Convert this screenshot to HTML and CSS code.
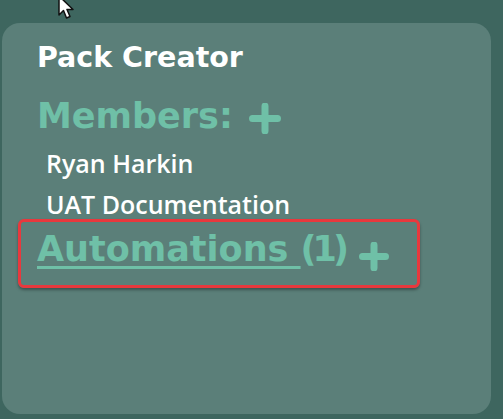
FILE: index.html
```html
<!DOCTYPE html>
<html lang="en">
<head>
  <meta charset="UTF-8">
  <meta name="viewport" content="width=device-width, initial-scale=1.0">
  <title>Pack Creator</title>
  <link rel="stylesheet" href="styles.css">
</head>
<body>
  <div class="card">
    <h2 class="title">Pack Creator</h2>

    <div class="section">
      <span class="section-name">Members:</span>
      <svg class="plus" width="32" height="31" viewBox="0 0 32 31">
        <path d="M16 3 V28 M3.5 15.5 H28.5" stroke="#6fc0a7" stroke-width="7" stroke-linecap="round"/>
      </svg>
    </div>
    <ul class="members">
      <li>Ryan Harkin</li>
      <li>UAT Documentation</li>
    </ul>

    <div class="highlight">
      <div class="section">
        <span class="section-name"><a href="#" class="link">Automations </a><span class="count">(1)</span></span>
        <svg class="plus plus-low" width="30" height="29" viewBox="0 0 30 29">
          <path d="M15 3 V26 M3.5 14.5 H26.5" stroke="#6fc0a7" stroke-width="7" stroke-linecap="round"/>
        </svg>
      </div>
    </div>
  </div>

  <svg class="cursor" width="22" height="26" viewBox="0 0 22 26">
    <path d="M2 1 L2 20 L6.5 15.5 L9.5 23 L13 21.5 L10 14.5 L16 14.5 Z" fill="#fff" stroke="#111" stroke-width="1.5" stroke-linejoin="round"/>
  </svg>
</body>
</html>
```

FILE: styles.css
```css
body {
  margin: 0;
  padding: 0;
  background-color: #3e665f;
  font-family: 'Open Sans', sans-serif;
  height: 419px;
  overflow: hidden;
}

.card {
  margin: 23px 0 0 2px;
  width: 489px;
  height: 391px;
  box-sizing: border-box;
  padding: 19px 0 0 35px;
  background-color: #5b7f79;
  border-radius: 18px;
}

.title {
  margin: 0;
  font-family: 'DejaVu Sans', sans-serif;
  font-weight: bold;
  font-size: 28.5px;
  line-height: 32px;
  color: #fff;
}

.section {
  display: flex;
  align-items: flex-start;
  gap: 16px;
  margin-top: 22px;
}

.section-name {
  font-family: 'DejaVu Sans', sans-serif;
  font-weight: bold;
  font-size: 35px;
  line-height: 40px;
  color: #6fc0a7;
}

.link {
  color: #6fc0a7;
  text-decoration: underline;
  text-decoration-thickness: 2.5px;
  text-underline-offset: 5px;
}

.count {
  letter-spacing: -4px;
}

.plus {
  flex-shrink: 0;
  margin-top: 7px;
}

.plus-low {
  margin-top: 13px;
}

.members {
  list-style: none;
  margin: 7px 0 0;
  padding: 0 0 0 9px;
}

.members li {
  font-weight: 600;
  font-size: 25px;
  line-height: 41px;
  color: #fff;
}

.highlight {
  margin: -6px 0 0 -19px;
  width: 402px;
  height: 69px;
  box-sizing: border-box;
  padding-left: 16px;
  border: 3px solid #e8383d;
  border-radius: 6px;
  box-shadow: 0 2px 3px rgba(0, 0, 0, 0.35);
}

.highlight .section {
  margin-top: 7px;
  gap: 14px;
}

.cursor {
  position: absolute;
  top: -5px;
  left: 57px;
}
```
